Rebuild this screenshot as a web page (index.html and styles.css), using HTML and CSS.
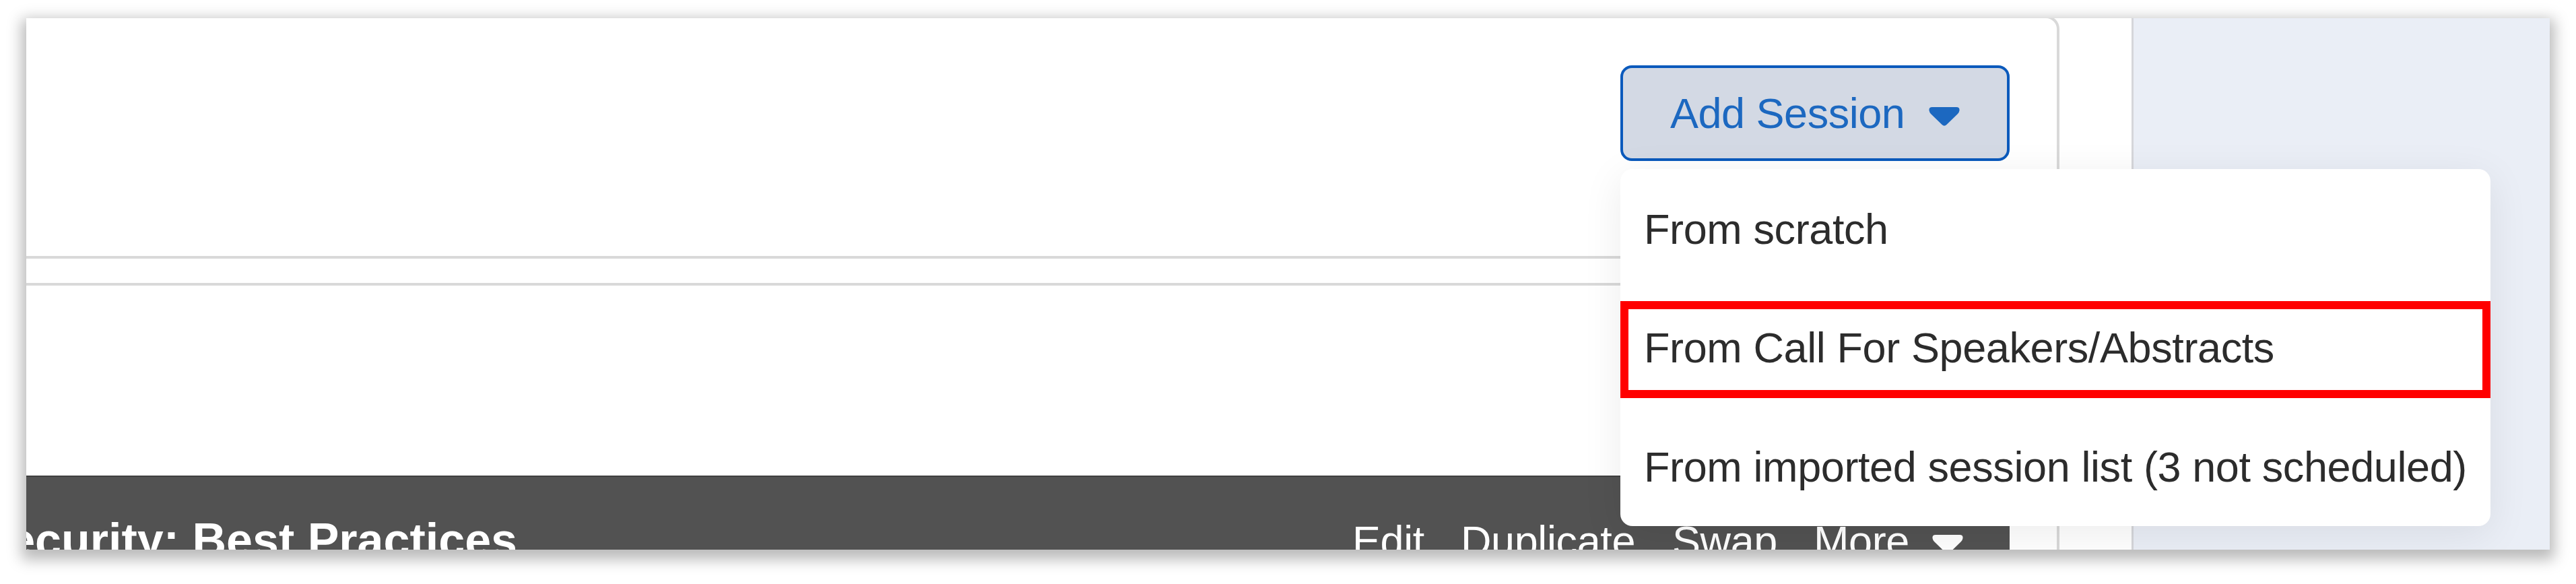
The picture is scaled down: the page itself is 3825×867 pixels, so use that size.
FILE: index.html
```html
<!DOCTYPE html>
<html lang="en">
<head>
<meta charset="utf-8">
<title>Sessions</title>
<link rel="stylesheet" href="styles.css">
</head>
<body>
<div class="frame">
  <main class="main">
    <section class="card toolbar">
      <div class="dropdown">
        <button class="add-button" type="button">
          <span>Add Session</span>
          <svg class="caret" viewBox="0 0 46 28"><path d="M5 0H41Q46 0 45.500 5Q45 8 43 10L26.500 26Q23 29.500 19.500 26L3 10Q1 8 .500 5Q0 0 5 0Z"/></svg>
        </button>
        <ul class="menu">
          <li class="item">From scratch</li>
          <li class="item highlighted">From Call For Speakers/Abstracts</li>
          <li class="item">From imported session list (3 not scheduled)</li>
        </ul>
      </div>
    </section>
    <section class="card sessions">
      <header class="session-bar">
        <h2 class="session-title">Security: Best Practices</h2>
        <nav class="actions">
          <span class="edit">Edit</span>
          <span class="duplicate">Duplicate</span>
          <span class="swap">Swap</span>
          <span class="more">More</span>
          <svg class="caret" viewBox="0 0 46 28"><path d="M5 0H41Q46 0 45.500 5Q45 8 43 10L26.500 26Q23 29.500 19.500 26L3 10Q1 8 .500 5Q0 0 5 0Z"/></svg>
        </nav>
      </header>
    </section>
  </main>
  <aside class="sidebar"></aside>
</div>
</body>
</html>
```

FILE: styles.css
```css
* { box-sizing: border-box; }

body {
  margin: 0;
  height: 867px;
  padding: 27px 39px 51px;
  background: #fff;
  overflow: hidden;
  font-family: "Liberation Sans", Arial, sans-serif;
  font-size: 63px;
  letter-spacing: -0.4px;
}

.frame {
  display: flex;
  width: 3747px;
  height: 789px;
  background: #fff;
  overflow: hidden;
  box-shadow: 0 8px 20px 7px rgba(0, 0, 0, 0.27);
}

.main {
  display: flex;
  flex-direction: column;
  gap: 36px;
  width: 3126px;
  padding-right: 107px;
}

.sidebar {
  flex: 1;
  border-left: 3px solid #d5d6da;
  background: #eaeef6;
}

.card {
  flex: none;
  border: 4px solid #d9d9d9;
  border-left: 0;
}

.toolbar {
  display: flex;
  justify-content: flex-end;
  height: 361px;
  margin-top: -4px;
  padding: 70px 70px 0 0;
  border-radius: 0 20px 0 0;
}

.dropdown {
  position: relative;
  width: 578px;
  height: 142px;
}

.add-button {
  display: flex;
  align-items: center;
  width: 578px;
  height: 142px;
  padding: 0 0 0 70px;
  gap: 36px;
  border: 4px solid #0b5abc;
  border-radius: 17px;
  background: #d3d9e4;
  color: #1c68c0;
  font: inherit;
  letter-spacing: -0.5px;
}

.add-button .caret { margin-top: 9px; }

.caret {
  width: 46px;
  height: 28px;
  flex: none;
  fill: currentColor;
}

.menu {
  position: absolute;
  z-index: 2;
  top: 154px;
  left: 0;
  width: 1292px;
  height: 530px;
  margin: 0;
  padding: 20px 0 0;
  list-style: none;
  border-radius: 18px;
  background: #fff;
  color: #2c2c2c;
  box-shadow: 0 12px 60px rgba(0, 0, 0, 0.08);
}

.item {
  display: flex;
  align-items: center;
  height: 144px;
  margin-bottom: 32px;
  padding: 0 0 6px 35px;
  white-space: nowrap;
}

.item:last-child { padding-bottom: 4px; }

.highlighted {
  padding-left: 23px;
  border: 12px solid #f00;
}

.sessions {
  height: 500px;
  padding: 282px 70px 0 0;
}

.session-bar {
  display: flex;
  justify-content: space-between;
  height: 200px;
  border-top: 2px solid #3f3f3f;
  background: #525252;
  color: #fff;
}

.session-title {
  display: flex;
  justify-content: flex-end;
  width: 729px;
  height: 180px;
  margin: 0;
  padding-top: 54px;
  overflow: hidden;
  white-space: nowrap;
  font-size: 70px;
  font-weight: 700;
  line-height: 80px;
  letter-spacing: 0;
}

.actions {
  display: flex;
  width: 976px;
  padding-top: 59px;
  line-height: 72px;
}

.edit { width: 161px; }
.duplicate { width: 314px; }
.swap { width: 210px; }
.more { width: 176px; }
.actions .caret { margin-top: 27px; }
```
